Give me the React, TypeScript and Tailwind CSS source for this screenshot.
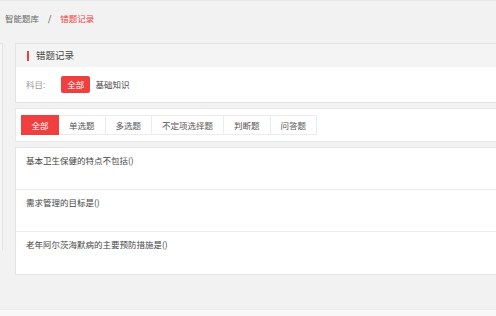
const font = { fontFamily: '"Noto Sans CJK SC", "Liberation Sans", sans-serif' };

const tabs = ["单选题", "多选题", "不定项选择题", "判断题", "问答题"];
const questions = [
  "基本卫生保健的特点不包括()",
  "需求管理的目标是()",
  "老年阿尔茨海默病的主要预防措施是()",
];

export default function App() {
  return (
    <div
      className="flex h-[316px] w-[496px] flex-col overflow-hidden border-t border-[#e8e8e8] bg-[#f2f2f2] text-[8.5px] text-[#444]"
      style={font}
    >
      {/* breadcrumb */}
      <div className="flex h-[42px] shrink-0 items-center px-[5px] pb-[7px] text-[8.5px]">
        <span className="text-[#666]">智能题库</span>
        <span className="mx-[9px] text-[#444]">/</span>
        <span className="text-[#ef3f3f]">错题记录</span>
      </div>

      <div className="flex flex-1 gap-[12px]">
        {/* side panel edge */}
        <div className="h-[207px] w-[3px] shrink-0 border-r border-t border-[#e2e2e2] bg-[#f6f6f6]" />

        <div className="flex flex-1 flex-col gap-[5px]">
          {/* card: filter */}
          <div className="border-y border-l border-[#e4e4e4] bg-white">
            <div className="flex h-[23px] items-center bg-[#f4f4f4] pl-[11px]">
              <span className="h-[10px] w-[2px] bg-[#ef3f3f]" />
              <span className="ml-[7px] text-[9.5px] text-[#444]">错题记录</span>
            </div>
            <div className="flex h-[35px] items-center pl-[10px]">
              <span className="text-[#999]">科目:</span>
              <span className="ml-[16px] flex h-[17px] w-[29px] items-center justify-center rounded-[2px] bg-[#ef3f3f] text-white">
                全部
              </span>
              <span className="ml-[5px] text-[#444]">基础知识</span>
            </div>
          </div>

          {/* card: tabs */}
          <div className="flex h-[34px] items-center border-y border-l border-[#e8e8e8] bg-white pl-[5px]">
            <div className="flex h-[20px]">
              <span className="flex w-[38px] items-center justify-center bg-[#ef3f3f] text-white">全部</span>
              {tabs.map((t) => (
                <span
                  key={t}
                  className="flex items-center justify-center border-y border-r border-[#ececec] px-[10px] text-[#555]"
                >
                  {t}
                </span>
              ))}
            </div>
          </div>

          {/* card: questions */}
          <div className="border-y border-l border-[#e4e4e4] bg-white">
            {questions.map((q, i) => (
              <div
                key={q}
                className={`h-[42px] pl-[10px] pt-[6px] text-[#444] ${
                  i < questions.length - 1 ? "border-b border-[#ececec]" : ""
                }`}
              >
                {q}
              </div>
            ))}
          </div>
        </div>
      </div>

      {/* footer strip */}
      <div className="h-[7px] shrink-0 border-t border-[#ececec] bg-[#f8f8f8]" />
    </div>
  );
}
